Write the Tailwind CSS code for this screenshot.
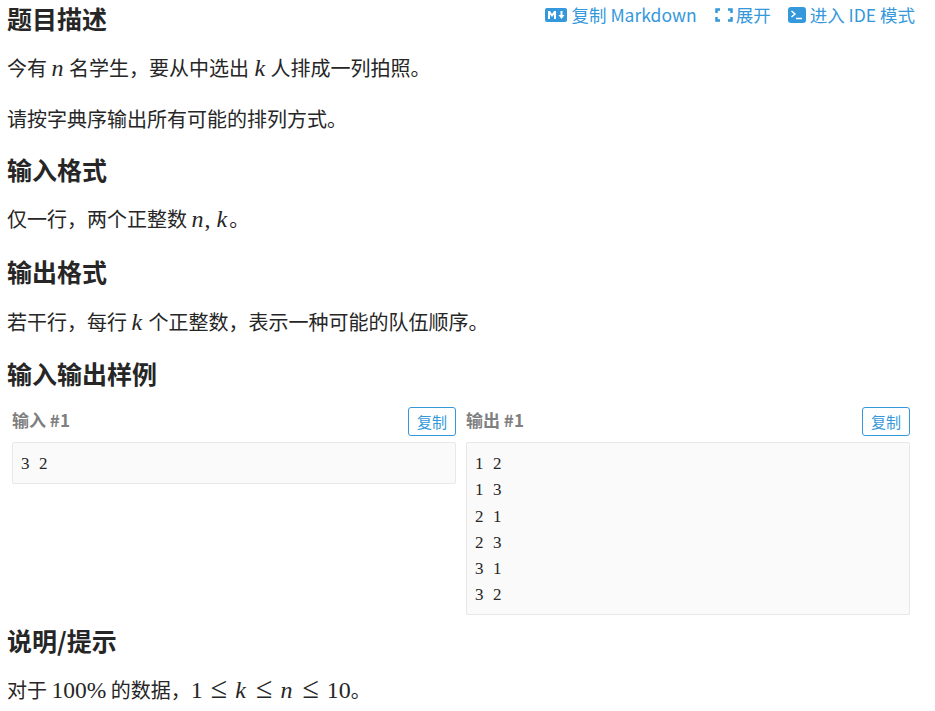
<!DOCTYPE html>
<html lang="zh-CN"><head><meta charset="utf-8"><script src="https://cdn.jsdelivr.net/npm/@tailwindcss/browser@4"></script></head>
<body class="bg-white overflow-hidden">
<main class="w-[935px] h-[711px] overflow-hidden pl-[7px] pr-[20px] text-[#262626] font-['Noto_Sans_CJK_SC','Noto_Sans',sans-serif] text-[20px] leading-[30px]">
<section class="flex items-start justify-between h-[34px]">
<h2 class="text-[25px] font-bold leading-[36px]">题目描述</h2>
<div class="flex items-center text-[#3498db] text-[17.5px] leading-[30px]">
<a class="flex items-center"><svg class="w-[22px] h-[14px] mr-[4px]" viewBox="0 0 22 14"><rect width="22" height="14" rx="2" fill="#3498db"/><path d="M3 11V3h2l2 3 2-3h2v8H9V6.500L7 9 5 6.500V11zM15.500 3h2v4h2l-3 4-3-4h2z" fill="#fff"/></svg>复制 Markdown</a>
<a class="flex items-center ml-[18px]"><svg class="w-[18px] h-[14px] mr-[3px]" viewBox="0 0 18 14" fill="none" stroke="#3498db" stroke-width="2.500"><path d="M1.500 5V1.500H5M13 1.500h3.500V5M16.500 9v3.500H13M5 12.500H1.500V9"/></svg>展开</a>
<a class="flex items-center ml-[17px]"><svg class="w-[18px] h-[16px] mr-[4px]" viewBox="0 0 18 16"><rect width="18" height="16" rx="3" fill="#3498db"/><path d="M3.500 4l3.500 3-3.500 3" fill="none" stroke="#fff" stroke-width="1.500"/><path d="M8 11.500h6" stroke="#fff" stroke-width="1.500"/></svg>进入 IDE 模式</a>
</div>
</section>
<p class="mt-[19px]">今有 <i class="font-['Liberation_Serif',serif] text-[24px] mr-[1px]">n</i> 名学生，要从中选出 <i class="font-['Liberation_Serif',serif] text-[24px] ml-[1px] mr-[1px]">k</i> 人排成一列拍照。</p>
<p class="mt-[21px]">请按字典序输出所有可能的排列方式。</p>
<h2 class="mt-[17px] text-[25px] font-bold leading-[36px]">输入格式</h2>
<p class="mt-[17px]">仅一行，两个正整数 <i class="font-['Liberation_Serif',serif] text-[24px] mr-[1px]">n</i><span class="font-['Liberation_Serif',serif] text-[24px] mr-[6px]">,</span><i class="font-['Liberation_Serif',serif] text-[24px] mr-[2px]">k</i>。</p>
<h2 class="mt-[19px] text-[25px] font-bold leading-[36px]">输出格式</h2>
<p class="mt-[18px]">若干行，每行 <i class="font-['Liberation_Serif',serif] text-[24px] mr-[2px]">k</i> 个正整数，表示一种可能的队伍顺序。</p>
<h2 class="mt-[18px] text-[25px] font-bold leading-[36px]">输入输出样例</h2>
<div class="grid grid-cols-[444px_444px] gap-x-[10px] ml-[5px] mt-[16px] items-start">
<div>
<div class="flex justify-between items-start h-[35px]"><span class="text-[#7f7f7f] text-[17px] font-bold leading-[26px]">输入 #1</span><button class="w-[48px] h-[29px] border border-[#3498db] rounded-[3px] text-[#3498db] text-[15px] leading-[27px]">复制</button></div>
<pre class="h-[42px] border border-[#e8e8e8] rounded-[2px] bg-[#fafafa] px-2 pt-[8px] text-[17px] tracking-[0.5px] [word-spacing:4.25px] leading-[26.300px] font-['Liberation_Serif',serif]">3 2</pre>
</div>
<div>
<div class="flex justify-between items-start h-[35px]"><span class="text-[#7f7f7f] text-[17px] font-bold leading-[26px]">输出 #1</span><button class="w-[48px] h-[29px] border border-[#3498db] rounded-[3px] text-[#3498db] text-[15px] leading-[27px]">复制</button></div>
<pre class="h-[173px] border border-[#e8e8e8] rounded-[2px] bg-[#fafafa] px-2 pt-[8px] text-[17px] tracking-[0.5px] [word-spacing:4.25px] leading-[26.300px] font-['Liberation_Serif',serif]">1 2
1 3
2 1
2 3
3 1
3 2</pre>
</div>
</div>
<h2 class="mt-[7px] text-[25px] font-bold leading-[36px]">说明/提示</h2>
<p class="mt-[17px]">对于 <span class="font-['Liberation_Serif',serif] text-[23.5px]">100%</span> 的数据，<span class="font-['Liberation_Serif',serif] text-[24px]">1<span class="mx-[8px] text-[30px] leading-[0]">≤</span><i class="mr-[2px]">k</i><span class="mx-[8px] text-[30px] leading-[0]">≤</span><i class="mr-[2px]">n</i><span class="mx-[8px] text-[30px] leading-[0]">≤</span>10</span>。</p>
</main>
</body></html>
